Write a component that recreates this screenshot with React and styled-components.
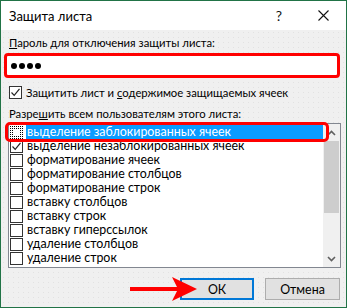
import React from "react";
import styled, { createGlobalStyle } from "styled-components";

const Global = createGlobalStyle`
  html, body { margin: 0; padding: 0; background: #ffffff; }
  * { box-sizing: border-box; }
`;

const Window = styled.div`
  width: 347px;
  height: 308px;
  border: 1px solid #217346;
  display: flex;
  flex-direction: column;
  font-family: Lato, "Noto Sans", sans-serif;
  font-size: 11.3px;
  color: #000;
  overflow: hidden;
`;

const TitleBar = styled.div`
  height: 29px;
  background: #fff;
  display: flex;
  align-items: center;
  padding-left: 8px;
  flex-shrink: 0;
`;

const Title = styled.div`
  flex: 1;
  font-size: 13px;
  line-height: 16px;
  margin-top: 1px;
`;

const TitleButton = styled.div`
  width: ${(p) => p.$w}px;
  display: flex;
  justify-content: center;
  align-items: center;
  font-size: 14px;
  color: #111;
`;

const Body = styled.div`
  flex: 1;
  background-color: #f0f0f0;
  background-image: radial-gradient(#e2e2e2 0.6px, transparent 0.8px);
  background-size: 5px 5px;
  display: flex;
  flex-direction: column;
  padding: 4px 6px 0 3px;
`;

const Label = styled.div`
  line-height: 15px;
  padding-left: 5px;
  margin-top: ${(p) => p.$mt || 0}px;
  white-space: nowrap;
  font-size: 11.3px;
`;

const U = styled.span`
  text-decoration: underline;
  text-underline-offset: 1px;
`;

const PasswordBox = styled.div`
  margin-top: 3px;
  height: 25px;
  border: 3px solid #ff0000;
  border-radius: 4px;
  background: #fff;
  display: flex;
  align-items: center;
  padding-left: 4px;
  gap: 1px;
`;

const Dot = styled.span`
  width: 6px;
  height: 6px;
  border-radius: 50%;
  background: #000;
  margin-right: 1px;
`;

const CheckRow = styled.div`
  display: flex;
  align-items: center;
  height: ${(p) => p.$h || 14}px;
  padding-left: ${(p) => p.$pl || 2}px;
  margin-top: ${(p) => p.$mt || 0}px;
  white-space: nowrap;
  font-size: 11.3px;
`;

const Box = styled.div`
  width: 13px;
  height: 13px;
  border: 1px solid #333;
  background: #fff;
  flex-shrink: 0;
  display: flex;
  align-items: center;
  justify-content: center;
  ${(p) =>
    p.$focus &&
    `border: 1px dotted #000; outline: 1px dotted #000; outline-offset: -3px;`}
`;

const RowText = styled.div`
  margin-left: 3px;
  line-height: 14px;
  height: 14px;
  padding-left: 1px;
  ${(p) => p.$selected && `background: #0a9cff; color: #fff; flex: 1;`}
`;

const ListArea = styled.div`
  margin-top: 2px;
  margin-left: 4px;
  width: 333px;
  height: 145px;
  border: 1px solid #828790;
  background: #fff;
  display: flex;
  position: relative;
`;

const Rows = styled.div`
  flex: 1;
  display: flex;
  flex-direction: column;
  padding-top: 1px;
`;

const ListRow = styled.div`
  display: flex;
  align-items: center;
  height: 14px;
  padding-left: 1px;
  white-space: nowrap;
  font-size: 12.4px;
`;

const Highlight = styled.div`
  position: absolute;
  left: -4px;
  top: -2px;
  width: 324px;
  height: 20px;
  border: 3px solid #ff0000;
  border-radius: 5px;
  pointer-events: none;
`;

const ScrollBar = styled.div`
  width: 17px;
  background: #f0f0f0;
  display: flex;
  flex-direction: column;
  align-items: center;
`;

const ScrollArrow = styled.div`
  height: 17px;
  width: 17px;
  display: flex;
  align-items: center;
  justify-content: center;
`;

const Thumb = styled.div`
  width: 15px;
  height: 72px;
  background: #cdcdcd;
`;

const Spacer = styled.div`
  flex: 1;
`;

const Footer = styled.div`
  display: flex;
  justify-content: flex-end;
  gap: 11px;
  margin-top: 10px;
  position: relative;
`;

const Button = styled.div`
  width: ${(p) => p.$w}px;
  height: 22px;
  background: #e1e1e1;
  border: ${(p) => (p.$default ? "2px solid #0078d7" : "1px solid #adadad")};
  display: flex;
  align-items: center;
  justify-content: center;
  font-size: 12.4px;
`;

const Arrow = styled.svg`
  position: absolute;
  left: 122px;
  top: -3px;
`;

const Check = () => (
  <svg width="11" height="11" viewBox="0 0 11 11">
    <polyline points="1.5,5.5 4.2,8.3 9.5,1.8" fill="none" stroke="#222" strokeWidth="1.2" />
  </svg>
);

const Chevron = ({ up }) => (
  <svg width="9" height="6" viewBox="0 0 9 6">
    <polyline
      points={up ? "1,5 4.5,1.5 8,5" : "1,1 4.5,4.5 8,1"}
      fill="none"
      stroke="#606060"
      strokeWidth="1.6"
    />
  </svg>
);

const items = [
  { t: "выделение заблокированных ячеек", c: false, sel: true },
  { t: "выделение незаблокированных ячеек", c: true },
  { t: "форматирование ячеек", c: false },
  { t: "форматирование столбцов", c: false },
  { t: "форматирование строк", c: false },
  { t: "вставку столбцов", c: false },
  { t: "вставку строк", c: false },
  { t: "вставку гиперссылок", c: false },
  { t: "удаление столбцов", c: false },
  { t: "удаление строк", c: false },
];

export default function App() {
  return (
    <>
      <Global />
      <Window>
        <TitleBar>
          <Title>Защита листа</Title>
          <TitleButton $w={42}>?</TitleButton>
          <TitleButton $w={46}>
            <svg width="11" height="11" viewBox="0 0 11 11">
              <path d="M0.5 0.5 L10.5 10.5 M10.5 0.5 L0.5 10.5" stroke="#111" strokeWidth="1.1" />
            </svg>
          </TitleButton>
        </TitleBar>
        <Body>
          <Label $mt={1}>
            <U>П</U>ароль для отключения защиты листа:
          </Label>
          <PasswordBox>
            <Dot />
            <Dot />
            <Dot />
            <Dot />
          </PasswordBox>
          <CheckRow $h={15} $mt={7} $pl={5}>
            <Box>
              <Check />
            </Box>
            <RowText>
              Защитить лист и <U>с</U>одержимое защищаемых ячеек
            </RowText>
          </CheckRow>
          <Label $mt={6}>
            Разре<U>ш</U>ить всем пользователям этого листа:
          </Label>
          <ListArea>
            <Rows>
              {items.map((it, i) => (
                <ListRow key={i}>
                  <Box $focus={it.sel}>{it.c && <Check />}</Box>
                  <RowText $selected={it.sel}>{it.t}</RowText>
                </ListRow>
              ))}
            </Rows>
            <ScrollBar>
              <ScrollArrow>
                <Chevron up />
              </ScrollArrow>
              <Thumb />
              <Spacer />
              <ScrollArrow>
                <Chevron />
              </ScrollArrow>
            </ScrollBar>
            <Highlight />
          </ListArea>
          <Footer>
            <Arrow width="72" height="28" viewBox="0 0 72 28">
              <rect x="4" y="12" width="48" height="4" fill="#ff0000" />
              <polygon points="46,2 71,14 46,26 52,14" fill="#ff0000" />
            </Arrow>
            <Button $w={74} $default>
              ОК
            </Button>
            <Button $w={75}>Отмена</Button>
          </Footer>
        </Body>
      </Window>
    </>
  );
}
